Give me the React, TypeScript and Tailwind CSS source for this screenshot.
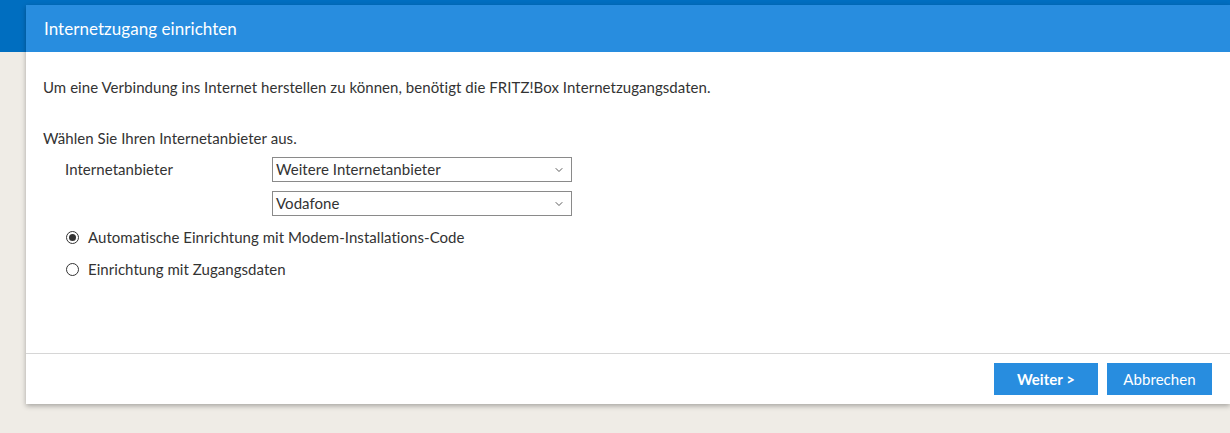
import { ChevronDown } from "lucide-react";

const font = { fontFamily: '"Lato", "Liberation Sans", sans-serif' };

const SelectBox = ({ value }: { value: string }) => (
  <div className="flex h-[25px] w-[300px] items-center justify-between border border-[#8a8a8a] bg-white pl-[3px] pr-[6px] text-[15px] text-[#333]">
    <span>{value}</span>
    <ChevronDown className="h-[12px] w-[12px] text-[#444]" strokeWidth={1.75} />
  </div>
);

const Radio = ({ checked, label }: { checked?: boolean; label: string }) => (
  <label className="flex h-[20px] items-center gap-[9px] text-[15px] text-[#333]">
    <span className="flex h-[13px] w-[13px] items-center justify-center rounded-full border border-[#333] bg-white">
      {checked && <span className="h-[7px] w-[7px] rounded-full bg-[#333]" />}
    </span>
    {label}
  </label>
);

export default function App() {
  return (
    <div className="min-h-[433px] bg-[#efece6] tracking-[0.05px]" style={font}>
      {/* page header strip behind the dialog */}
      <div className="h-[52px] bg-[#006ec0]" />

      <div className="-mt-[47px] ml-[26px] bg-white shadow-[0_2px_5px_rgba(0,0,0,0.3)]">
        <div className="flex h-[47px] items-center bg-[#288ddf] px-[18px] text-[17px] text-white">
          Internetzugang einrichten
        </div>

        <div className="h-[301px] pl-[17px] pr-[18px] pt-[25px] text-[15px] text-[#333]">
          <p className="leading-[20px]">
            Um eine Verbindung ins Internet herstellen zu können, benötigt die
            FRITZ!Box Internetzugangsdaten.
          </p>
          <p className="mt-[31px] leading-[20px]">Wählen Sie Ihren Internetanbieter aus.</p>

          <div className="mt-[9px] flex pl-[22px]">
            <div className="w-[207px] leading-[25px]">Internetanbieter</div>
            <div className="flex flex-col gap-[9px]">
              <SelectBox value="Weitere Internetanbieter" />
              <SelectBox value="Vodafone" />
            </div>
          </div>

          <div className="mt-[11px] flex flex-col gap-[12px] pl-[23px]">
            <Radio checked label="Automatische Einrichtung mit Modem-Installations-Code" />
            <Radio label="Einrichtung mit Zugangsdaten" />
          </div>
        </div>

        <div className="flex h-[51px] items-start justify-end gap-[9px] border-t border-[#d6d6d6] px-[18px] pt-[9px]">
          <button className="h-[32px] w-[104px] bg-[#288ddf] text-[15px] font-bold text-white">
            Weiter &gt;
          </button>
          <button className="h-[32px] w-[105px] bg-[#288ddf] text-[15px] text-white">
            Abbrechen
          </button>
        </div>
      </div>
    </div>
  );
}
